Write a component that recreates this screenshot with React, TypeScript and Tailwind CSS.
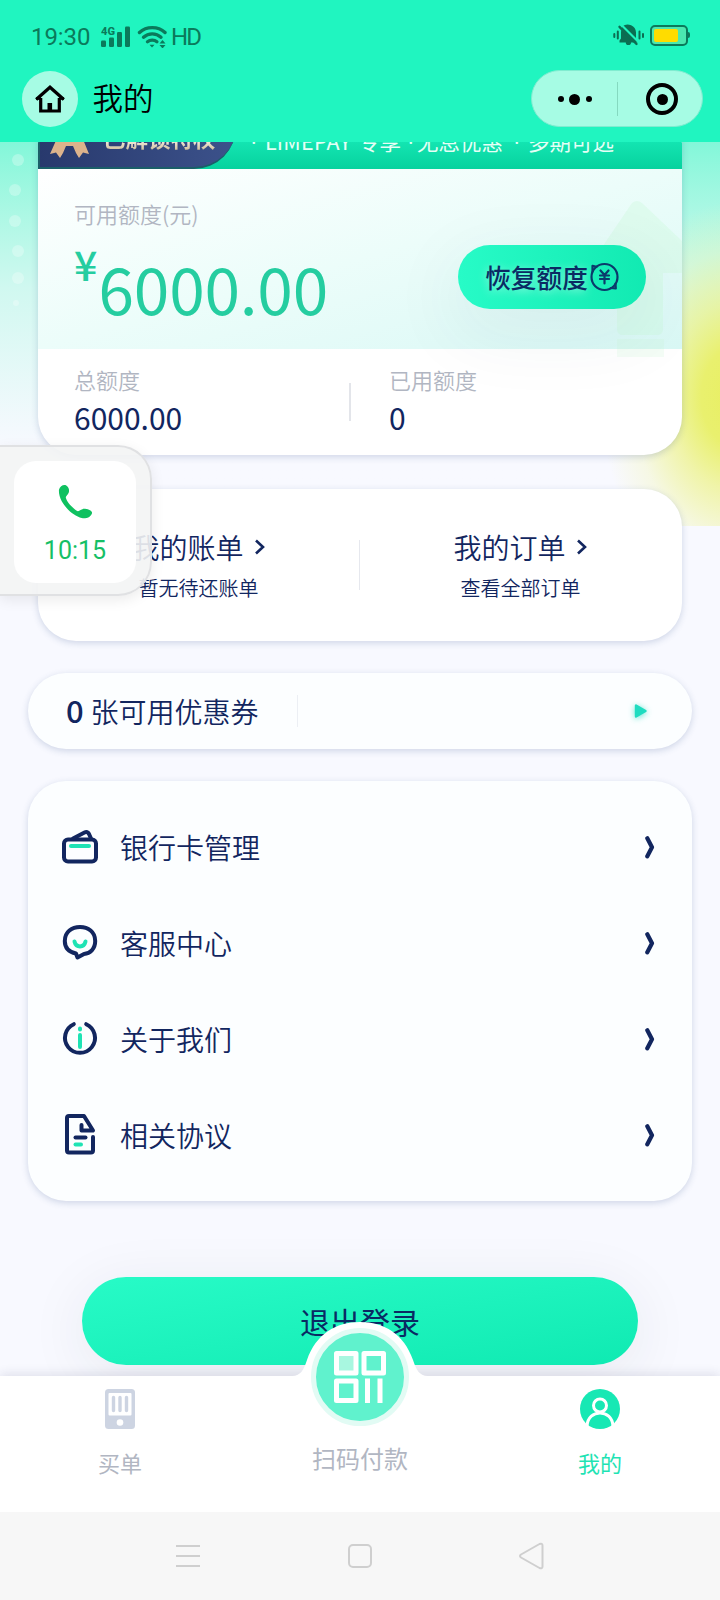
import type { ReactNode } from 'react';

const NAVY = '#12265f';
const MINT = '#1fe3b4';

function StatusBar() {
  return (
    <div className="flex h-[70px] items-center justify-between pr-[30px] pl-[31px] font-[Roboto,sans-serif] text-[#0b7a5b]">
      <div className="flex items-center pt-[3px]">
        <span className="w-[70px] text-2xl leading-7 font-[450] tracking-[-0.1px]">19:30</span>
        <svg width="30" height="22" viewBox="0 0 30 22" fill="#0b7a5b">
          <text x="0" y="9" fontSize="11" fontWeight="800" textLength="14" lengthAdjust="spacingAndGlyphs" fontFamily="Roboto, sans-serif">
            4G
          </text>
          <rect x="0" y="14.500" width="5" height="6.500" rx="1.200" />
          <rect x="8" y="11.500" width="5" height="9.500" rx="1.200" />
          <rect x="16" y="6" width="5" height="15" rx="1.200" />
          <rect x="24" y="0.500" width="5" height="20.500" rx="1.200" />
        </svg>
        <svg className="ml-[6px]" width="30" height="23" viewBox="0 0 30 23" fill="none" stroke="#0b7a5b" strokeWidth="3.400" strokeLinecap="round">
          <path d="M2.500 7.500c7-6.500 18.500-6.500 25.500 0" />
          <path d="M6.500 12.200c5-4.500 12.500-4.500 17.500 0" />
          <path d="M10.500 16.700c2.600-2.100 6.800-2.100 9.400 0" />
          <path d="M12.500 19.800h5L15 22.500z" fill="#0b7a5b" stroke="none" />
          <path d="M22.500 18.500l3-3.500 3 3.500zM22.500 20l3 3.500 3-3.500z" fill="#0b7a5b" stroke="none" />
        </svg>
        <span className="ml-[4px] text-[24px] leading-7 font-[450] tracking-[-1.8px]">HD</span>
      </div>
      <div className="flex items-center gap-[6px]">
        <svg width="31" height="24" viewBox="0 0 31 24" fill="#0b6e52">
          <path d="M9.500 3.200A8.500 8.500 0 0 1 23 9.500v8l1.800 2H18a2.600 2.600 0 0 1-5.200 0H6.500v-2L8 15.500v-6c0-1 .2-2 .5-3z" />
          <path d="M8 1.500l18 18" stroke="#20f5c0" strokeWidth="2.200" />
          <path d="M6.500 3.800l17 17.200" stroke="#0b6e52" strokeWidth="2.400" strokeLinecap="round" />
          <path d="M1.300 11v3M4.800 8.500v7M26.500 8.500v7M30 11v3" stroke="#0b6e52" strokeWidth="2" strokeLinecap="round" />
        </svg>
        <div className="flex items-center">
          <div className="flex h-[21px] w-[38px] items-center rounded-[5px] border-2 border-[#0b7a5b] bg-[#4be8b0] pl-[2px]">
            <div className="h-[13px] w-[24px] rounded-[2px] bg-[#ffdc00]" />
          </div>
          <div className="h-[6px] w-[2px] rounded-r bg-[#0b7a5b]" />
        </div>
      </div>
    </div>
  );
}

function NavBar() {
  return (
    <div className="flex h-[72px] items-start pr-[17px] pl-[21.5px]">
      <div className="mt-[0.5px] flex size-[56px] items-center justify-center rounded-full bg-[#a6fce4]">
        <svg className="mt-[1px]" width="30" height="28" viewBox="0 0 30 28" fill="none" stroke="#000" strokeWidth="3.200">
          <path d="M1.200 14.500L15 2.200l13.800 12.300" />
          <path d="M5.700 13v13h18.600V13" />
          <path d="M1 13.500h5M24 13.500h5" strokeWidth="2.400" />
          <path d="M14.800 18v8" strokeWidth="4.600" />
        </svg>
      </div>
      <h1 className="mt-[6px] ml-[15px] text-[30.500px] leading-[42px] font-[350] text-black">我的</h1>
      <div className="ml-auto flex h-[57px] w-[172px] items-center rounded-full border border-[#80ecd0] bg-[#a6fce4] pt-px">
        <div className="flex w-[85px] items-center justify-center gap-[5.5px]">
          <span className="size-[6px] rounded-full bg-black" />
          <span className="size-[11px] rounded-full bg-black" />
          <span className="size-[6px] rounded-full bg-black" />
        </div>
        <span className="h-[34px] w-px bg-[#85d9c0]" />
        <div className="flex flex-1 items-center justify-center pl-[4px]">
          <div className="flex size-[32px] items-center justify-center rounded-full border-4 border-black">
            <span className="size-[11px] rounded-full bg-black" />
          </div>
        </div>
      </div>
    </div>
  );
}

function Backdrop() {
  return (
    <div className="absolute inset-x-0 top-0 h-[384px] overflow-hidden bg-gradient-to-b from-[#82f7d9] via-[#d0f8f0] via-38% to-[#f8f9ff] to-80%">
      <div className="absolute top-[60px] -right-[150px] h-[390px] w-[270px] bg-[radial-gradient(closest-side,#e8ef62_0%,#e9f06e_25%,#edf288b8_48%,#f1f5aa50_75%,#f4f6d000_100%)]" />
      <svg className="absolute top-0 left-0" width="38" height="170" viewBox="0 0 38 170" fill="#fff" fillOpacity="0.28">
        <circle cx="18" cy="18" r="6" />
        <circle cx="15" cy="48" r="6" />
        <circle cx="15" cy="79" r="6" />
        <circle cx="18" cy="109" r="6" />
        <circle cx="18" cy="136" r="6" />
        <circle cx="16" cy="161" r="3" />
      </svg>
    </div>
  );
}

function Dot() {
  return <span className="mt-[7px] w-[6px] font-[Roboto,sans-serif]">·</span>;
}

function PrivilegeStrip() {
  return (
    <div className="flex h-[62px] rounded-t-[38px] bg-gradient-to-b from-[#17ecb9] from-40% to-[#06d29e]">
      <div className="flex h-[62px] w-[198px] items-center rounded-tl-[38px] rounded-br-[42px] border-b-2 border-l-2 border-[#1b5f68] bg-gradient-to-r from-[#28396d] to-[#3c528b] pl-[9px]">
        <svg className="mt-[14px]" width="42" height="34" viewBox="0 0 42 34">
          <path d="M13 0L1 27l6-1.500 4 5.500 3-5 3-7h7l3 7 3 5 4-5.500 6 1.500L29 0z" fill="#dcb38c" />
        </svg>
        <span className="ml-[12px] bg-gradient-to-b from-[#fff6dd] via-white to-[#c9b184] bg-clip-text text-[22.500px] leading-8 font-bold whitespace-nowrap text-transparent">
          已解锁特权
        </span>
      </div>
      <p className="flex flex-1 items-center pt-[5px] pl-[15px] text-[21.500px] leading-8 whitespace-nowrap text-[#e4fff6]">
        <Dot />
        <span className="ml-[8px] w-[93px] tracking-[0.2px]">LIMEPAY</span>
        <span className="mr-[6px] w-[44px]">专享</span>
        <Dot />
        <span className="mr-[9px] ml-[3px] w-[88px]">无息优惠</span>
        <Dot />
        <span className="ml-[8px]">多期可选</span>
      </p>
    </div>
  );
}

function YuanBadge() {
  return (
    <svg width="30" height="30" viewBox="0 0 30 30" fill="none" stroke="#0b3a6b" strokeWidth="2.200" strokeLinecap="round" strokeLinejoin="round">
      <circle cx="15.500" cy="15" r="13" />
      <path d="M7.500 4.800L3.500 3.800L3.500 9.500M26.500 21.500l.3 5-5-.5" />
      <path d="M11.500 8.500l4 4.500 4-4.500M11 13.500h9M11 17h9M15.500 13v8.500" />
    </svg>
  );
}

function CreditCard() {
  return (
    <section className="relative mx-auto -mt-[35px] h-[348px] w-[644px] overflow-hidden rounded-[38px] bg-white shadow-[0_2px_7px_rgba(40,70,130,0.2)]">
      <PrivilegeStrip />
      <div className="h-[180px] bg-gradient-to-br from-white via-[#ecfdfa] to-[#d9f8f5]" />
      {/* faint arrow behind the button */}
      <svg className="absolute top-[92px] right-0" width="100" height="162" viewBox="0 0 100 162" fill="#c8f7d4" fillOpacity="0.3">
        <path d="M50 4q5-4 10 0l40 38v32H81v56q0 6-6 6H41q-6 0-6-6V74H12q-8-2-4-8z" />
        <rect x="35" y="140" width="47" height="18" fillOpacity="0.2" />
      </svg>
      <div className="absolute inset-x-0 top-[62px] flex h-[180px] items-center justify-between pr-[36px] pl-[36px]">
        <div className="-mt-[7px]">
          <p className="text-[22px] leading-8 font-[350] text-[#b1b6c2]">可用额度(元)</p>
          <p className="flex h-[86px] text-[#25cda0]">
            <span className="mt-[9px] w-[24.500px] text-[41px] leading-[50px] font-medium">¥</span>
            <span className="mt-[18px] text-[64px] leading-[80px] tracking-[-0.2px]">6000.00</span>
          </p>
        </div>
        <button className="mt-[36px] flex h-[64px] w-[188px] items-center justify-center rounded-full bg-gradient-to-r from-[#27fbc7] to-[#11eab2] text-[25.700px] leading-8 font-[450] text-[#0a2a63] shadow-[0_20px_70px_10px_rgba(30,60,80,0.06)]">
          <span className="[text-shadow:0_2px_10px_rgba(255,255,255,0.5)]">恢复额度</span>
          <span className="ml-px">
            <YuanBadge />
          </span>
        </button>
      </div>
      <div className="flex h-[106px] pt-[17px] pl-[36px]">
        <div className="w-[275px]">
          <p className="text-[22px] leading-[26px] font-[350] text-[#b1b6c2]">总额度</p>
          <p className="mt-[7px] text-[30px] leading-9 text-[#12265f]">6000.00</p>
        </div>
        <span className="mt-[17px] h-[38px] w-[2px] bg-[#e3e5ea]" />
        <div className="pl-[38px]">
          <p className="text-[22px] leading-[26px] font-[350] text-[#b1b6c2]">已用额度</p>
          <p className="mt-[7px] text-[30px] leading-9 text-[#12265f]">0</p>
        </div>
      </div>
    </section>
  );
}

function BillLink({ title, note }: { title: string; note: string }) {
  return (
    <div className="flex flex-1 flex-col items-center pt-[38px] font-[350] text-[#12265f]">
      <div className="flex items-center">
        <span className="text-[28px] leading-10">{title}</span>
        <svg className="-mt-[1px] ml-[10px]" width="12" height="18" viewBox="0 0 12 18" fill="none" stroke={NAVY} strokeWidth="2.600">
          <path d="M2 2.500L9 9l-7 6.500" />
        </svg>
      </div>
      <p className="mt-[7px] text-[20px] leading-7">{note}</p>
    </div>
  );
}

function Bills() {
  return (
    <section className="relative mx-auto mt-[34px] flex h-[152px] w-[644px] rounded-[38px] bg-white pr-px shadow-[0_2px_7px_rgba(40,70,130,0.2)]">
      <BillLink title="我的账单" note="暂无待还账单" />
      <span className="mt-[51px] h-[50px] w-px bg-[#e6e8ee]" />
      <BillLink title="我的订单" note="查看全部订单" />
    </section>
  );
}

function Coupons() {
  return (
    <section className="relative mx-auto mt-[32px] flex h-[76px] w-[664px] items-center rounded-full bg-[#fcfeff] pr-[43px] pl-[38px] text-[#12265f] shadow-[0_2px_7px_rgba(40,70,130,0.2)]">
      <span className="-mt-[2px] w-[24.500px] text-[31px] leading-10 font-medium">0</span>
      <span className="text-[28px] leading-10 font-[350]">张可用优惠券</span>
      <span className="ml-[38px] h-[32px] w-px bg-[#eceff4]" />
      <svg className="ml-auto overflow-visible drop-shadow-[0_1px_3px_rgba(31,220,190,0.7)]" width="15" height="16" viewBox="0 0 15 16">
        <path d="M2 2.500v11L11.500 8z" fill="#1fdcc0" stroke="#1fdcc0" strokeWidth="2.400" strokeLinejoin="round" />
      </svg>
    </section>
  );
}

function MenuIcon({ children }: { children: ReactNode }) {
  return (
    <svg width="40" height="44" viewBox="0 0 40 44" fill="none" stroke={NAVY} strokeWidth="4" strokeLinecap="round" strokeLinejoin="round">
      {children}
    </svg>
  );
}

const menu = [
  {
    label: '银行卡管理',
    icon: (
      <MenuIcon>
        <rect x="4" y="14.500" width="32" height="22" rx="4" />
        <path d="M13 13.500l11.500-6q3-1.500 4.500 1.500l2 4.500" />
        <path d="M11 21h18" stroke={MINT} />
      </MenuIcon>
    ),
  },
  {
    label: '客服中心',
    icon: (
      <MenuIcon>
        <path d="M20 6C28 6 35.200 10.500 35.200 20C35.200 28 30 32.500 24 33L17.500 36.500L16 32.500C9 31 4.800 27 4.800 20C4.800 10.500 12 6 20 6z" />
        <path d="M14.500 20.500c1.500 6.500 9.500 6.500 11 0" stroke={MINT} />
      </MenuIcon>
    ),
  },
  {
    label: '关于我们',
    icon: (
      <MenuIcon>
        <path d="M13.800 7.200a15 15 0 1 0 12.400 0" />
        <path d="M20 18v12M20 11.500v1" stroke={MINT} />
      </MenuIcon>
    ),
  },
  {
    label: '相关协议',
    icon: (
      <MenuIcon>
        <path d="M33 24v13.500q0 2-2 2H9q-2 0-2-2V5q0-2 2-2h15l9 14.500H21.500V12" />
        <path d="M15.500 24.500h10" />
        <path d="M15.500 31.500h5.500" stroke={MINT} />
      </MenuIcon>
    ),
  },
];

function Menu() {
  return (
    <section className="relative mx-auto mt-[32px] h-[420px] w-[664px] rounded-[38px] bg-[#fcfeff] pt-[18px] pr-[36px] pl-[32px] shadow-[0_2px_7px_rgba(40,70,130,0.2)]">
      {menu.map((item) => (
        <div key={item.label} className="flex h-24 items-center">
          {item.icon}
          <span className="ml-[20px] text-[28px] leading-10 font-[350] text-[#12265f]">{item.label}</span>
          <svg className="ml-auto" width="12" height="24" viewBox="0 0 12 24" fill="none" stroke={NAVY} strokeWidth="4.200" strokeLinecap="round" strokeLinejoin="round">
            <path d="M3.300 3.300L8 12.300 3.300 21.300" />
          </svg>
        </div>
      ))}
    </section>
  );
}

function CallBubble() {
  return (
    <div className="absolute top-[445px] left-0 flex h-[151px] w-[152px] items-center rounded-r-[34px] border-2 border-l-0 border-[#e0e1e3] bg-[#f3f4f4]/90 pt-[2px] pl-[14px] shadow-[0_4px_14px_rgba(0,0,0,0.08)]">
      <div className="flex h-[122px] w-[122px] flex-col items-center rounded-[22px] bg-white pt-[23px]">
        <svg width="35" height="35" viewBox="0 0 36 36">
          <path
            d="M1 6C2 2 6 0 8.500 1.500C11 3 12 6 11 9C10 11.500 8 12.500 8 14C9 19 16 26 20.500 28C22.500 28 24 25 28 25.500C32 26 35.500 28 35 30C33.500 34.500 28 36 24.500 35C13 32 0 18 1 6z"
            fill="#0fc160"
          />
        </svg>
        <span className="mt-[16px] font-[Roboto,sans-serif] text-[25px] leading-8 text-[#16bf66]">10:15</span>
      </div>
    </div>
  );
}

function TabBar() {
  return (
    <nav className="relative flex h-[136px] bg-white text-[22px] leading-8 text-[#b1b6c2] shadow-[0_-2px_10px_rgba(40,40,80,0.12)]">
      <svg className="absolute -top-[54px] left-[292px]" width="136" height="56" viewBox="0 0 136 56" fill="#fff">
        <path d="M0 54C9 54 12 47 15 38C24 12 44 0 68 0s44 12 53 38c3 9 6 16 15 16v2H0z" />
      </svg>
      <div className="flex w-[240px] flex-col items-center pt-[13px]">
        <svg width="30" height="40" viewBox="0 0 30 40" fill="#cdd4e2">
          <rect width="30" height="40" rx="3.500" />
          <rect x="3.500" y="4" width="23" height="22.500" rx="1" fill="#fff" />
          <path d="M8.500 8.500v13M15 8.500v13M21.500 8.500v13" stroke="#cdd4e2" strokeWidth="3.400" strokeLinecap="round" />
          <circle cx="15" cy="33.500" r="3.300" fill="#fff" />
        </svg>
        <span className="mt-[17px]">买单</span>
      </div>
      <div className="relative -mt-[48px] flex w-[240px] flex-col items-center">
        <div className="flex size-[98px] items-center justify-center rounded-full border-[5px] border-[#e2fbf4] bg-[#60f2cd]">
          <svg width="54" height="54" viewBox="0 0 54 54" fill="none" stroke="#fff" strokeWidth="5" strokeLinejoin="round">
            <rect x="3.500" y="3.500" width="19.500" height="19.500" fill="#a8f7e0" />
            <rect x="31" y="3.500" width="19.500" height="19.500" />
            <rect x="3.500" y="31" width="19.500" height="19.500" />
            <path d="M34.500 28.500V53M47 28.500V53" />
          </svg>
        </div>
        <span className="mt-[16px] text-2xl leading-8">扫码付款</span>
      </div>
      <div className="flex w-[240px] flex-col items-center pt-[13px] text-[#1fe3b4]">
        <svg width="40" height="40" viewBox="0 0 40 40">
          <circle cx="20" cy="20" r="20" fill="#17e8b4" />
          <g fill="none" stroke="#fff" strokeWidth="3">
            <circle cx="20" cy="16.500" r="6.500" />
            <path d="M7 37C8 19.500 32 19.500 33 37" />
          </g>
        </svg>
        <span className="mt-[17px]">我的</span>
      </div>
    </nav>
  );
}

function SystemNav() {
  return (
    <div className="relative flex h-[88px] items-center justify-between bg-[#f7f7f7] px-[176px]">
      <svg width="24" height="26" viewBox="0 0 24 26" stroke="#cfcfcf" strokeWidth="2">
        <path d="M0 3h24M0 13h24M0 23h24" />
      </svg>
      <span className="size-[24px] rounded-[5px] border-2 border-[#cfcfcf]" />
      <svg width="25" height="28" viewBox="0 0 25 28" fill="none" stroke="#cfcfcf" strokeWidth="2" strokeLinejoin="round">
        <path d="M2 12.500L20.500 2q3-1 3 1.500v21q0 2.500-3 1.500L2 15.500q-2-1.500 0-3z" />
      </svg>
    </div>
  );
}

export default function App() {
  return (
    <div className="relative flex h-[1600px] w-[720px] flex-col overflow-hidden bg-[#f8f9ff] font-['Noto_Sans_CJK_SC',sans-serif]">
      <header className="relative z-10 h-[142px] bg-[#20f5c0]">
        <StatusBar />
        <NavBar />
      </header>
      <main className="relative h-[1234px] overflow-hidden">
        <Backdrop />
        <CreditCard />
        <Bills />
        <Coupons />
        <Menu />
        <button className="relative mx-auto mt-[76px] flex h-[88px] w-[556px] items-center justify-center rounded-full bg-gradient-to-br from-[#27fbc7] to-[#0eeab2] text-[30px] leading-10 font-normal text-[#0a2a63] shadow-[0_10px_60px_0px_rgba(40,50,70,0.08)]">
          退出登录
        </button>
      </main>
      <TabBar />
      <SystemNav />
      <CallBubble />
    </div>
  );
}
